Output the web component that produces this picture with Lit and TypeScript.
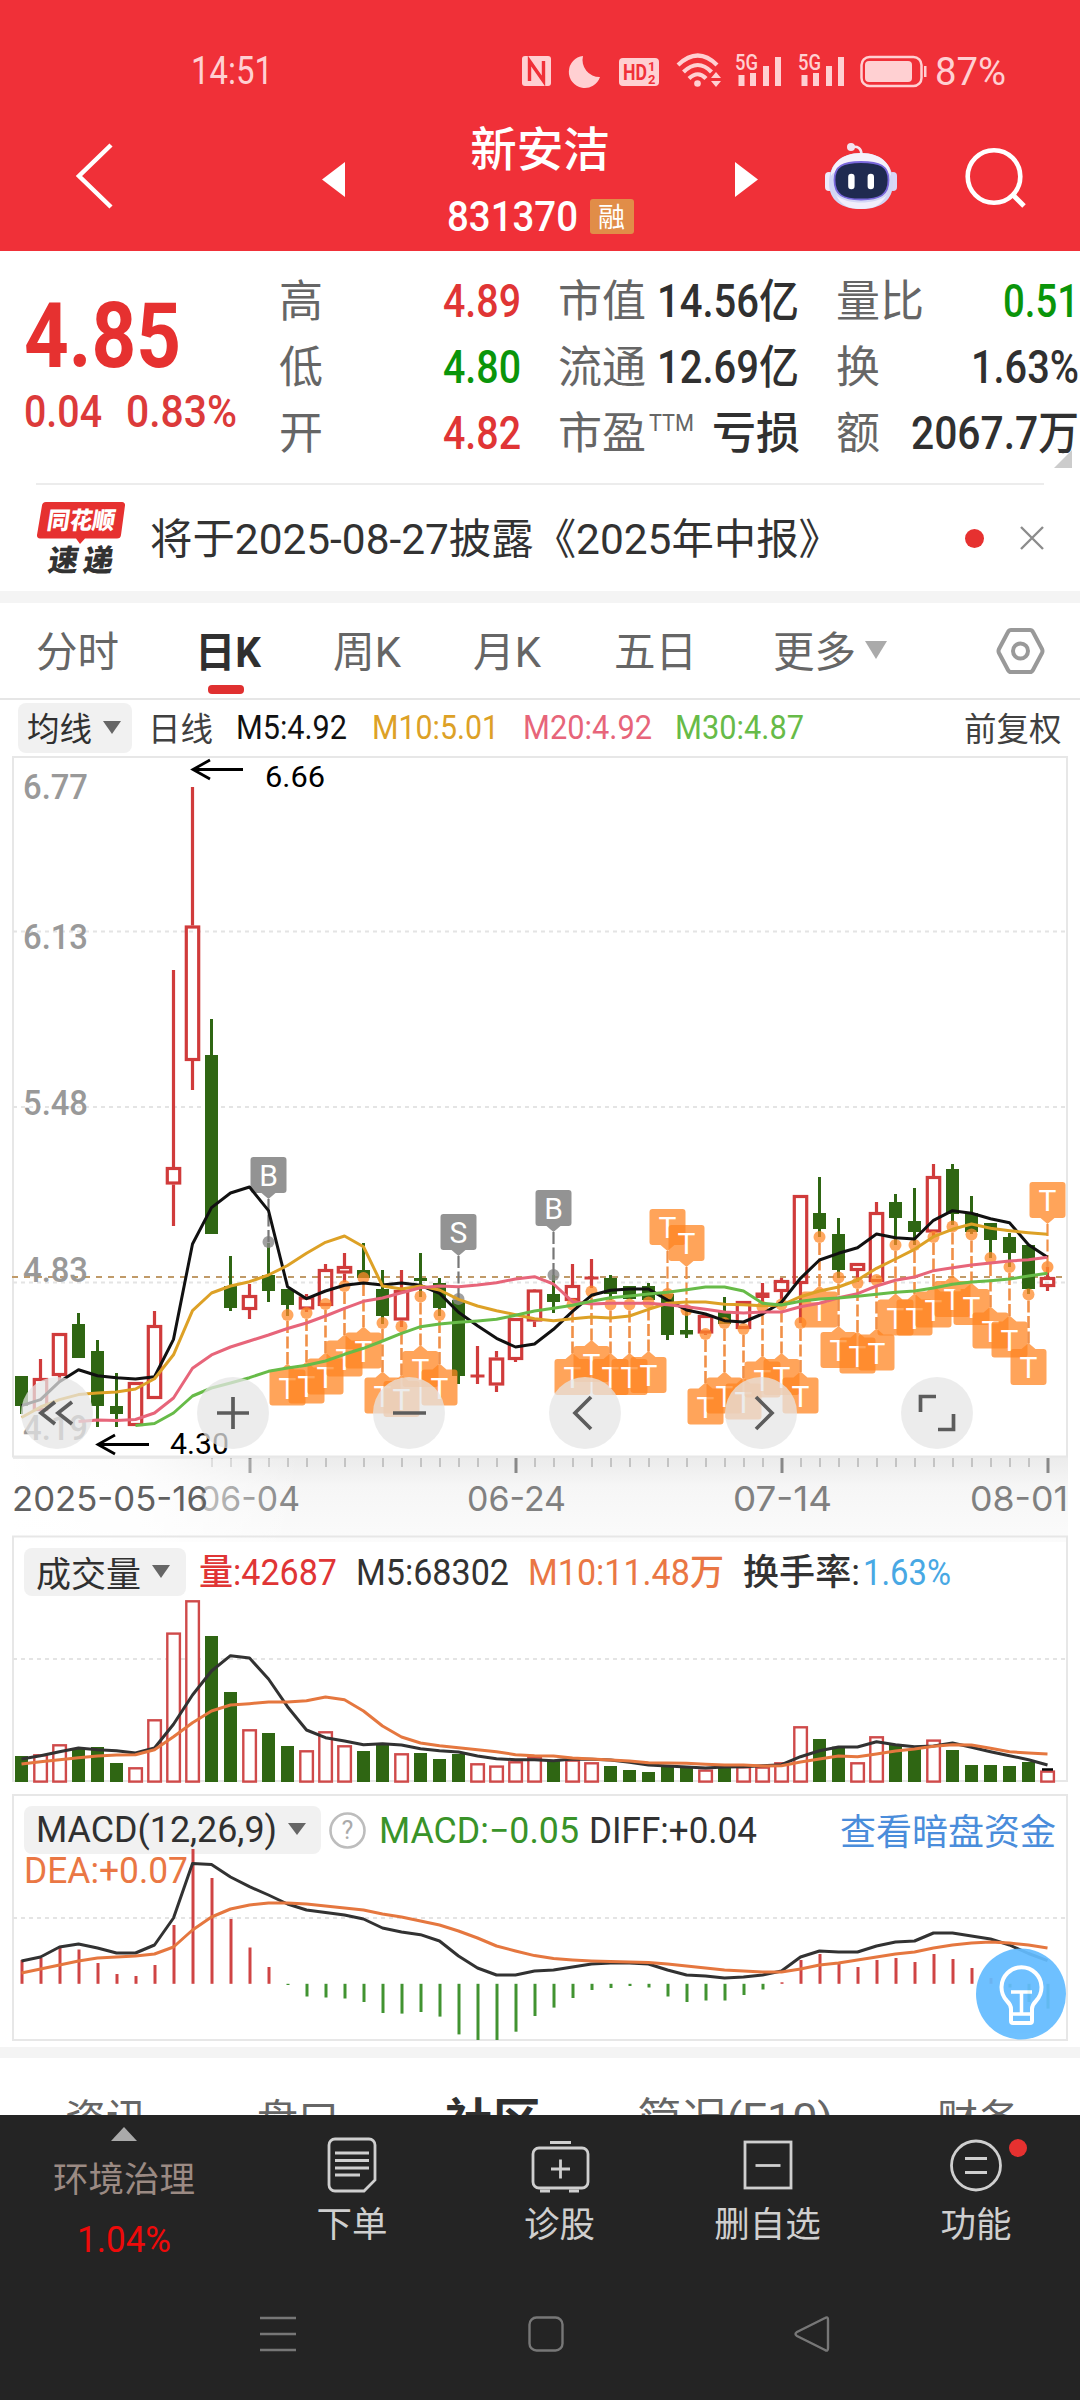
import { LitElement, html, svg, css } from "lit";
import { customElement } from "lit/decorators.js";

const STEP = 19;
const px = (i: number) => 21.5 + STEP * i;
const points = (ys: number[], start = 0) =>
  ys.map((y, k) => `${px(start + k)},${y}`).join(" ");

/** A line of text set to an exact width, vertically centred on its capitals. */
const fit = (text: string, width: number, size: number, cls = "") => html`
  <svg class="fit ${cls}" width=${width} height=${size}>
    <text x="0" y=${size * 0.86} font-size=${size} textLength=${width} lengthAdjust="spacingAndGlyphs">${text}</text>
  </svg>`;

const label = (text: string, x: number, y: number, width: number, size: number, cls: string) => svg`
  <text class=${cls} x=${x} y=${y} font-size=${size} textLength=${width} lengthAdjust="spacingAndGlyphs">${text}</text>`;

/** kind, high, body top, body bottom, low */
type Candle = ["r" | "g", number, number, number, number];
const CANDLES: Candle[] = [
  ["g", 1376, 1376, 1406, 1414], ["r", 1359, 1378, 1411, 1411], ["r", 1333, 1333, 1376, 1382],
  ["g", 1313, 1324, 1358, 1358], ["g", 1340, 1351, 1406, 1427], ["g", 1373, 1406, 1414, 1427],
  ["r", 1382, 1382, 1426, 1426], ["r", 1311, 1325, 1399, 1399], ["r", 970, 1167, 1184.5, 1226],
  ["r", 787, 925.5, 1061, 1090], ["g", 1019, 1055, 1234, 1234], ["g", 1256, 1286, 1308, 1311],
  ["r", 1284, 1295, 1310, 1319], ["g", 1243, 1275, 1291, 1302], ["g", 1289, 1289, 1305, 1316],
  ["r", 1294, 1296.5, 1309.5, 1312], ["r", 1264, 1269, 1306, 1306], ["r", 1253, 1266, 1273.5, 1282],
  ["g", 1243, 1270, 1278, 1278], ["g", 1270, 1289, 1316, 1324], ["r", 1270, 1290, 1320.5, 1327],
  ["g", 1253, 1278, 1281, 1297], ["g", 1278, 1283, 1308, 1316], ["g", 1300, 1300, 1376, 1384],
  ["r", 1346, 1375, 1377, 1384], ["r", 1351, 1357.5, 1385.5, 1392], ["r", 1318, 1318, 1360, 1362],
  ["r", 1289, 1289.5, 1321.5, 1327], ["g", 1275, 1294, 1302, 1313], ["r", 1264, 1285, 1301, 1301],
  ["r", 1259, 1277, 1279, 1288], ["g", 1275, 1278, 1294, 1300], ["g", 1286, 1286, 1299, 1299],
  ["g", 1283, 1286, 1300, 1300], ["g", 1292, 1294, 1335, 1340], ["g", 1308, 1330, 1334.5, 1338],
  ["r", 1315, 1315, 1333.5, 1335], ["g", 1297, 1312, 1324, 1324], ["r", 1301, 1301, 1329, 1329],
  ["r", 1283, 1293, 1297.5, 1303], ["r", 1278, 1280, 1292, 1302], ["r", 1195, 1195, 1284, 1323],
  ["g", 1177, 1213, 1229, 1237], ["g", 1218, 1234, 1270, 1278], ["r", 1263, 1263, 1271, 1282],
  ["r", 1202, 1212, 1282, 1282], ["g", 1194, 1202, 1218, 1245], ["g", 1188, 1221, 1232, 1245],
  ["r", 1164, 1176, 1232.5, 1237], ["g", 1164, 1169, 1214, 1225], ["g", 1196, 1213, 1232, 1234],
  ["g", 1223, 1223, 1240, 1258], ["g", 1233, 1237, 1253, 1267], ["g", 1245, 1245, 1289, 1294],
  ["r", 1267, 1277, 1287, 1291],
];

const M5 = [1405.6, 1399.6, 1381.7, 1369.8, 1375.7, 1377.7, 1379, 1376.7, 1339.4, 1244, 1207.6, 1193, 1187, 1210.6,
  1286.7, 1298.7, 1291, 1285.3, 1283, 1285, 1283, 1285.3, 1293.3, 1312.3, 1325.7, 1338.3, 1347, 1344, 1329.3, 1311.3,
  1295.3, 1290.3, 1289, 1289, 1300, 1310, 1314, 1320.7, 1322, 1314, 1302.3, 1278.3, 1260, 1253.3, 1247.7, 1234,
  1237.7, 1239, 1220.3, 1210.7, 1213.3, 1218.7, 1222.7, 1244.7, 1257.3];
const M10 = [1417.5, 1407, 1399.6, 1394.6, 1393, 1392, 1389, 1378.7, 1354.8, 1310.6, 1293, 1286, 1281.7, 1275,
  1265.5, 1253.3, 1242.3, 1236, 1246.7, 1286, 1289, 1286, 1290, 1299.3, 1306, 1310.7, 1314.7, 1318.7, 1320.7, 1318.7,
  1317, 1318, 1316, 1309.3, 1303.3, 1302, 1302, 1304.3, 1304.7, 1305.7, 1305, 1296.7, 1291, 1287, 1280, 1268.3, 1259,
  1249.3, 1236.7, 1229.3, 1224, 1228.3, 1230.7, 1232.7, 1234.3];
const M20 = [1421.5, 1420, 1420.5, 1419.5, 1413, 1398, 1368.3, 1354.9, 1347, 1341, 1335, 1328.5, 1323, 1316, 1308.3,
  1301.3, 1298, 1292.7, 1287.7, 1286, 1286.7, 1285, 1282.7, 1279, 1276.7, 1284, 1301.7, 1304, 1303.3, 1303.3, 1303.3,
  1304.7, 1306.7, 1309.3, 1312, 1313, 1312, 1312, 1306.7, 1303.3, 1297.7, 1293.7, 1286, 1280.3, 1277, 1270.7, 1267.7,
  1265, 1263, 1261, 1259.7, 1257.3];
const M30 = [1425.5, 1423.5, 1413, 1396, 1388, 1383, 1377.7, 1371.3, 1368, 1365.3, 1361, 1354.3, 1348.3, 1341, 1333.3,
  1326.7, 1324, 1322.3, 1321, 1319.3, 1315.3, 1311, 1308.3, 1305.3, 1301.3, 1297.7, 1296, 1294, 1292.3, 1289.7, 1287,
  1287, 1291, 1303.3, 1305, 1301.3, 1299, 1298, 1296.3, 1294.3, 1292.3, 1291, 1288, 1284.3, 1282, 1280.7, 1279, 1276,
  1273.3];

/** candle index, y of the marker's dot */
const T_BELOW: [number, number][] = [
  [14, 1315], [15, 1313], [16, 1304], [17, 1286], [18, 1278], [19, 1323], [20, 1326.5], [21, 1296.5], [22, 1315],
  [29, 1304.5], [30, 1291.5], [31, 1304.5], [32, 1304.5], [33, 1302.5], [36, 1334], [37, 1323], [38, 1329],
  [39, 1307], [40, 1304.5], [41, 1323], [42, 1237], [43, 1277.5], [44, 1283], [45, 1280], [46, 1245], [47, 1245],
  [48, 1237], [49, 1226.5], [50, 1234.5], [51, 1258], [52, 1267], [53, 1294.5],
];
const ABOVE: [number, number, string][] = [
  [13, 1242, "B"], [23, 1299, "S"], [28, 1275, "B"], [34, 1294, "T"], [35, 1310, "T"], [54, 1267, "T"],
];

const VOLUME = [1756, 1754.7, 1744.7, 1749, 1747, 1763, 1767.7, 1719.7, 1633, 1600.7, 1636, 1692, 1729.7, 1733, 1746,
  1750.7, 1731.7, 1745.7, 1751, 1745, 1753.7, 1753, 1759, 1754, 1763.7, 1766, 1761.7, 1757, 1761, 1760, 1762.7, 1766,
  1770, 1772, 1765, 1767, 1770, 1768, 1766.7, 1767, 1762.7, 1726.7, 1739, 1746.7, 1762.7, 1736.7, 1745, 1749, 1740,
  1750, 1765, 1765, 1766, 1762, 1771];
const VOLUME_KIND = "grrgggrrrrggrggrrrggrgggrrrrgrrgggggrgrrrrggrrggrgggggr";
const V5 = [1759, 1755.7, 1751.7, 1748, 1749.7, 1750.7, 1753, 1748, 1724.3, 1695, 1671, 1655.7, 1658, 1679, 1706.7,
  1730, 1737.7, 1741, 1744.7, 1743.7, 1745, 1748.7, 1750.7, 1752, 1756, 1758.7, 1759.7, 1759.7, 1760.7, 1759, 1759.3,
  1760, 1762.3, 1765, 1766, 1767, 1768, 1767, 1766.7, 1765.7, 1764.7, 1756.7, 1750.7, 1747, 1747, 1741.7, 1744.7,
  1746.7, 1746, 1743, 1747.3, 1751.7, 1755.7, 1759.7, 1765];
const V10 = [1764, 1761.7, 1759.7, 1757.7, 1756, 1755, 1754.7, 1749.7, 1736.7, 1722.7, 1711, 1705, 1703.7, 1702, 1702,
  1700.7, 1697, 1699.7, 1711, 1726, 1737, 1743, 1745.7, 1747.7, 1749.7, 1751.7, 1754.7, 1755.7, 1756, 1758, 1759, 1760,
  1761, 1762.7, 1763, 1763.3, 1764.3, 1765, 1765, 1766, 1765.7, 1762, 1759, 1756, 1756.7, 1754, 1751, 1749, 1746.3,
  1744.7, 1745, 1748.3, 1751.7, 1753, 1754];

const ZERO = 1983.8;
const MACD = [1960, 1958, 1947, 1949.5, 1963, 1974, 1976, 1965, 1925, 1849, 1878, 1919, 1947.5, 1967, 1985, 1996.5,
  1997.5, 1998.5, 2002, 2013, 2013.6, 2012, 2016.6, 2034.4, 2040, 2040, 2031.7, 2016, 2007.6, 1998, 1990, 1988, 1986,
  1987.5, 1996.5, 2002, 2000.5, 2000.5, 1995, 1989.5, 1982.3, 1960, 1954, 1963, 1967, 1960, 1958, 1962, 1954, 1959,
  1968, 1978, 1987.5, 2002, 2008.6];
const DIFF = [1961, 1957, 1947, 1944, 1948, 1953, 1953, 1945, 1918, 1863.6, 1864.6, 1877, 1886.7, 1895, 1904, 1910,
  1912.6, 1915, 1919, 1928, 1932, 1934.7, 1941, 1956, 1968, 1975, 1975, 1971, 1970, 1967, 1964, 1963, 1963, 1964, 1970,
  1975, 1976, 1978, 1977, 1975, 1971, 1957, 1951, 1952, 1952, 1946, 1942, 1941, 1933, 1933, 1936, 1939, 1945, 1953.5,
  1960.6];
const DEA = [1973, 1969, 1965, 1961, 1958, 1957, 1956, 1954, 1947, 1930, 1917, 1909, 1905, 1903, 1903, 1904, 1906,
  1908, 1910, 1914, 1917, 1921, 1925, 1931, 1938, 1946, 1951, 1955.6, 1958.6, 1960, 1961, 1961.6, 1962, 1962.6, 1964,
  1966, 1968, 1970, 1971, 1972, 1972, 1969, 1965, 1963, 1960, 1957, 1954, 1952, 1948, 1945, 1943, 1942, 1943, 1945,
  1948];

const candle = ([kind, high, top, bottom, low]: Candle, i: number) => {
  const x = px(i);
  if (kind === "g") {
    return svg`<g fill="#2f6613"><rect x=${x - 1.5} y=${high} width="3" height=${low - high}/>
      <rect x=${x - 6.5} y=${top} width="13" height=${bottom - top}/></g>`;
  }
  const solid = bottom - top < 5;
  return svg`<g stroke="#d03b3b" stroke-width="3.2" fill=${solid ? "#d03b3b" : "none"}>
    <path d="M${x} ${high}V${top}M${x} ${bottom}V${low}"/>
    ${solid
      ? svg`<path d="M${x - 7} ${(top + bottom) / 2}H${x + 7}" stroke-width=${bottom - top + 1}/><path d="M${x} ${top}V${bottom}"/>`
      : svg`<rect x=${x - 6.2} y=${top + 1.5} width="12.4" height=${bottom - top - 3}/>`}</g>`;
};

const below = ([i, dot]: [number, number]) => {
  const x = px(i), top = dot + 54.5;
  return svg`
    <circle cx=${x} cy=${dot} r="6" fill="#ff8a2a" opacity=".75"/>
    <path d="M${x} ${dot + 6}V${top - 5}" stroke="#f09048" stroke-width="2.6" stroke-dasharray="12 3.5"/>
    <path d="M${x - 15} ${top}H${x - 7}L${x} ${top - 6}L${x + 7} ${top}H${x + 15}a3 3 0 0 1 3 3v30a3 3 0 0 1 -3 3H${x - 15}a3 3 0 0 1 -3 -3v-30a3 3 0 0 1 3 -3z" fill="#ff8420" opacity=".74"/>
    <text class="mark" x=${x} y=${top + 29} font-size="30" text-anchor="middle">T</text>`;
};

const above = ([i, dot, letter]: [number, number, string]) => {
  const x = px(i), top = dot - 85, gray = letter !== "T";
  return svg`
    <circle cx=${x} cy=${dot} r="6" fill=${gray ? "#888" : "#ff8a2a"} opacity=".8"/>
    <path d="M${x} ${top + 42}V${dot}" stroke=${gray ? "#777" : "#f09048"} stroke-width="2.2" stroke-dasharray="12 3.5"/>
    <path d="M${x - 15} ${top}H${x + 15}a3 3 0 0 1 3 3v30a3 3 0 0 1 -3 3H${x + 7}L${x} ${top + 42}L${x - 7} ${top + 36}H${x - 15}a3 3 0 0 1 -3 -3v-30a3 3 0 0 1 3 -3z"
      fill=${gray ? "#8f8f8f" : "#ff8420"} opacity=${gray ? 0.97 : 0.74}/>
    <text class="mark" x=${x} y=${top + 28.5} font-size="30" text-anchor="middle">${letter}</text>`;
};

const volumeBar = (top: number, i: number) =>
  VOLUME_KIND[i] === "g"
    ? svg`<rect x=${px(i) - 6.5} y=${top} width="13" height=${1782 - top} fill="#2f6613"/>`
    : svg`<rect x=${px(i) - 6.2} y=${top + 0.6} width="12.6" height=${1781 - top} fill="#fff" stroke="#cf4a4a" stroke-width="2.4"/>`;

const macdBar = (y: number, i: number) => svg`
  <path d="M${px(i) + 0.5} ${ZERO}V${y}" stroke=${y < ZERO ? "#cf4444" : "#419331"} stroke-width="3"/>`;

const stat = (name: unknown, value: unknown) => html`<div class="stat"><span>${name}</span>${value}</div>`;
const caret = (size: number, h: number) => html`
  <svg class="caret" width=${size} height=${h}><path d="M0 0H${size}L${size / 2} ${h}z" fill="currentColor"/></svg>`;

@customElement("app-root")
export class AppRoot extends LitElement {
  static styles = css`
    :host { display: block; width: 1080px; height: 2400px; overflow: hidden; background: #fff; color: #323232;
      font-family: "Noto Sans CJK SC", sans-serif; line-height: 1; position: relative; }
    * { box-sizing: border-box; }
    svg { display: block; flex: none; overflow: visible; }
    text { fill: currentColor; font-family: Roboto, "Noto Sans CJK SC", sans-serif; }
    .b text { font-weight: 700; }
    .m text { font-weight: 500; }
    .n text { font-weight: 450; }
    .red { color: #e03535; } .green { color: #0a950a; } .dark { color: #303030; }
    .top { height: 251px; background: #f03038; color: #fff; }
    .status { height: 90px; padding: 46px 75px 0 191px; display: flex; justify-content: space-between; color: #ffd0d2; }
    .status .fit { margin-top: 5px; }
    .title { height: 161px; display: grid; grid-template-columns: 322px 116px 204px 93px 90px 103px 1fr; align-items: start; }
    .back { margin: 52px 0 0 73px; } .tri { margin-top: 72px; } .bot { margin: 53px 0 0 -1px; } .search { margin: 56px 0 0 36px; }
    .name { display: flex; flex-direction: column; align-items: center; padding-top: 33px; }
    .name b { font-weight: 500; font-size: 46.5px; line-height: 46px; }
    .code { display: flex; align-items: center; gap: 12px; margin-top: 25px; }
    .badge { width: 44px; height: 35px; border-radius: 3px; background: #e18d48; font-size: 27px; line-height: 33px; text-align: center; margin-top: 1px; }
    .quote { height: 232px; display: grid; grid-template-columns: 281px 799px; position: relative; }
    .price { padding: 39px 0 0 24px; color: #e63130; }
    .change { display: flex; gap: 24px; margin-top: 8px; color: #dc3a3a; }
    .stats { display: grid; grid-template-columns: 240px 239px 241px; column-gap: 39px; grid-auto-rows: 66px; padding-top: 16px; }
    .stat { display: flex; justify-content: space-between; align-items: center; font-size: 44px; color: #666; }
    .stat > span { display: flex; align-items: center; margin: 0 0 5px -2px; }
    .stat .ttm { margin: -16px 0 0 3px; }
    .stat > .strong { color: #303030; font-weight: 500; margin-right: -1px; }
    .corner { position: absolute; right: 8px; bottom: 15px; }
    .news { height: 108px; margin: 0 36px; border-top: 2px solid #ececec; display: grid; grid-template-columns: 114px 1fr 20px 35px 24px; align-items: center; }
    .news .dot { width: 19px; height: 19px; border-radius: 50%; background: #e63130; }
    .news .close { grid-column: 5; }
    .band { height: 12px; background: #f4f4f4; }
    .band.low { height: 11px; }
    .tabs { height: 97px; border-bottom: 2px solid #e6e6e6; padding: 0 0 0 36px; display: grid; color: #666; font-size: 41.5px;
      grid-template-columns: 159px 138px 140px 141px 159px 223px 1fr; align-items: center; position: relative; }
    .tabs > span { display: flex; align-items: center; padding-bottom: 1px; }
    .tabs .fit { margin-top: 3px; }
    .tabs .on { color: #303030; font-weight: 700; position: relative; }
    .tabs .on::after { content: ""; position: absolute; left: 13px; top: 57px; width: 36px; height: 9px; border-radius: 4px; background: #e03030; }
    .caret { color: #666; margin-left: 11px; }
    .tabs .caret { color: #aaa; margin-left: 9px; }
    .mas { height: 55px; display: grid; grid-template-columns: 130px 88px 136px 151px 152px 289px 1fr; align-items: center; padding-left: 18px; font-size: 32.5px; color: #404040; }
    .chip { background: #f1f1f1; border-radius: 8px; display: flex; align-items: center; height: 50px; color: #303030; }
    .mas .chip { width: 114px; padding-left: 9px; }
    .c5 { color: #111; } .c10 { color: #dda126; } .c20 { color: #e7657a; } .c30 { color: #67bb48; }
    .grid { stroke: #e7e7e7; stroke-width: 2; fill: none; }
    .dash { stroke: #e4e4e4; stroke-width: 2; stroke-dasharray: 4 4; }
    .line { fill: none; stroke-width: 3; stroke-linejoin: round; }
    .scale { fill: #999; font-weight: 500; } .note { fill: #000; }
    .day, .day0 { fill: #808080; font-family: Inter, sans-serif; } .day0 { fill: #606060; } .mark { fill: #fff; }
    .panel { position: relative; }
    .tools { position: absolute; left: 21px; top: 622px; display: flex; gap: 104px; }
    .legend { position: absolute; left: 24px; display: flex; align-items: center; height: 48px; font-size: 35px; color: #323232; }
    .volume .legend { top: 7px; } .macd .legend { top: 14px; }
    .legend .chip { height: 48px; padding: 0 0 2px 12px; }
    .volume .chip { width: 162px; margin-right: 13px; }
    .macd .chip { width: 297px; margin-right: 8px; }
    .or { color: #ea7744; } .blue { color: #48a8e4; } .g2 { color: #399329; }
    .s19 { margin-left: 19px; } .s3 { margin-left: 3px; } .s10 { margin-left: 10px; }
    .link { position: absolute; right: 24px; top: 17px; font-size: 36px; line-height: 40px; color: #4a8ddb; }
    .dea { position: absolute; left: 24px; top: 60px; }
    .bars { position: absolute; left: 0; top: 0; }
    .tip { position: absolute; left: 976px; top: 156px; opacity: .93; }
    .sections { height: 57px; overflow: hidden; padding: 36px 0 0 65px; display: grid; font-size: 41px; line-height: 45px; color: #666;
      grid-template-columns: 192px 188px 192px 300px 1fr; }
    .sections b { font-size: 48px; color: #303030; line-height: 48px; margin-top: -1px; font-weight: 700; }
    .sections .fit { margin-top: 3px; }
    .dock { height: 285px; background: #242424; color: #cfcfcf; position: relative; }
    .actions { height: 175px; display: grid; grid-template-columns: 248px 208px 207px 209px 208px; font-size: 35.5px; line-height: 40px; }
    .act { display: flex; flex-direction: column; align-items: center; }
    .act .ico { margin-top: 21px; height: 58px; } .act span { margin-top: 8px; }
    .sector { display: flex; flex-direction: column; align-items: center; color: #9b8a83; width: 248px; }
    .sector .up { margin-top: 12px; } .sector span { margin-top: 16px; } .sector .fit { margin-top: 24px; color: #ee0a0a; }
    .nav { display: grid; grid-template-columns: 260px 268px 267px 1fr; padding-top: 26px; }
    .nav svg:first-child { grid-column: 2; }
  `;

  private header() {
    const signal = svg`<text x="0" y="16" font-size="22" font-weight="500" textLength="23" lengthAdjust="spacingAndGlyphs">5G</text>
      <path d="M6.500 32V21M18 32V19M31 32V12M43 32V3" stroke="currentColor" stroke-width="6"/>`;
    return html`<div class="top">
      <div class="status">
        ${fit("14:51", 82, 38)}
        <svg width="484" height="50" viewBox="521 46 484 50">
          <path fill="currentColor" fill-rule="evenodd" d="M525 56H548a3 3 0 0 1 3 3V83a3 3 0 0 1 -3 3H525a3 3 0 0 1 -3 -3V59a3 3 0 0 1 3 -3z"/>
          <path d="M529.500 81V61L543.500 81V61" fill="none" stroke="#f03038" stroke-width="3.400"/>
          <path d="M583 56A16 16 0 1 0 600 77A17 17 0 0 1 583 56z" fill="currentColor"/>
          <rect x="619" y="58" width="40" height="28" rx="4" fill="currentColor"/>
          <g color="#f03038"><text x="623" y="80" font-size="22" font-weight="700" textLength="24" lengthAdjust="spacingAndGlyphs">HD</text>
          <text x="648" y="71" font-size="13" font-weight="700">1</text><text x="648" y="83.500" font-size="13" font-weight="700">2</text></g>
          <g fill="none" stroke="currentColor" stroke-width="4.200"><path d="M678 65Q698 46 717 65M683.500 72Q698 58 711.500 72M689 78.500Q698 70 706 78.500"/></g>
          <circle cx="697.500" cy="83.500" r="3.300" fill="currentColor"/>
          <path d="M711 78l5 -6l5 6zM711 81l5 6l5 -6z" fill="currentColor"/>
          <g transform="translate(735 54)">${signal}</g><g transform="translate(798 54)">${signal}</g>
          <rect x="861.500" y="57" width="60" height="29" rx="8" fill="none" stroke="currentColor" stroke-width="2.500"/>
          <rect x="865" y="61" width="47" height="21" rx="4" fill="currentColor"/><rect x="924" y="66" width="2.500" height="11" fill="currentColor"/>
          <text x="935" y="84.500" font-size="38" textLength="71" lengthAdjust="spacingAndGlyphs">87%</text>
        </svg>
      </div>
      <div class="title">
        <svg class="back" width="44" height="68"><path d="M38 3L6 34L38 65" fill="none" stroke="#fff" stroke-width="4.500"/></svg>
        <svg class="tri" width="24" height="35"><path d="M23 0V35L0 17.500z" fill="#fff"/></svg>
        <div class="name"><b>新安洁</b>
          <div class="code">${fit("831370", 131, 43, "m")}<span class="badge">融</span></div></div>
        <span></span>
        <svg class="tri" width="24" height="35"><path d="M0 0V35L23 17.500z" fill="#fff"/></svg>
        <svg class="bot" width="74" height="68" viewBox="824 143 74 68">
          <path d="M861.500 154Q861 145.500 852 147" stroke="#f4e6f2" stroke-width="2.600" fill="none"/><circle cx="851" cy="147" r="4" fill="#f3e3ef"/>
          <rect x="825" y="172" width="8" height="19" rx="4" fill="#eeeafb"/><rect x="889" y="172" width="8" height="19" rx="4" fill="#d9d6f6"/>
          <path d="M861 153C881 153 893 164 893 183C893 201 880 209 861 209C842 209 829 201 829 183C829 164 841 153 861 153z" fill="#d3d6f5"/>
          <path d="M861 153C881 153 891 164 891 176C885 162 838 162 831 176C831 164 842 153 861 153z" fill="#f5f1fb"/>
          <path d="M836 195C846 205 876 205 887 195C880 206 873 209 861 209C848 209 841 205 836 195z" fill="#f0eefc"/>
          <path d="M861 162C880 162 888.500 166 888.500 180C888.500 195 880 199.500 861 199.500C843 199.500 834.500 195 834.500 180C834.500 166 843 162 861 162z" fill="#1f2a50" stroke="#7a68dc" stroke-width="1.800"/>
          <path d="M851.400 177V186M870.800 177V186" stroke="#fff" stroke-width="6.400" stroke-linecap="round"/>
        </svg>
        <svg class="search" width="66" height="66"><circle cx="30" cy="30.500" r="26.300" fill="none" stroke="#fff" stroke-width="4.600"/><path d="M49 49L60 60" stroke="#fff" stroke-width="5"/></svg>
      </div>
    </div>`;
  }

  private quote() {
    return html`<div class="quote">
      <div class="price">${fit("4.85", 157, 90, "b")}
        <div class="change">${fit("0.04", 78, 45, "m")}${fit("0.83%", 111, 45, "m")}</div></div>
      <div class="stats">
        ${stat("高", fit("4.89", 78, 46, "m red"))}
        ${stat("市值", fit("14.56亿", 142, 46, "m dark"))}
        ${stat("量比", fit("0.51", 76, 46, "m green"))}
        ${stat("低", fit("4.80", 78, 46, "m green"))}
        ${stat("流通", fit("12.69亿", 142, 46, "m dark"))}
        ${stat("换", fit("1.63%", 108, 46, "m dark"))}
        ${stat("开", fit("4.82", 78, 46, "m red"))}
        ${stat(html`市盈<span class="ttm">${fit("TTM", 45, 24)}</span>`, html`<span class="strong">亏损</span>`)}
        ${stat("额", fit("2067.7万", 168, 46, "m dark"))}
      </div>
      <svg class="corner" width="18" height="18"><path d="M18 0V18H0z" fill="#ccc"/></svg>
    </div>
    <div class="news">
      <svg width="90" height="74" viewBox="36 500 90 74">
        <path d="M46 501H122a3 3 0 0 1 3 3.500L121 534a4 4 0 0 1 -4 3.500H85L80 543L76 537.500H40a3 3 0 0 1 -3 -3.500L42 504.500a4 4 0 0 1 4 -3.500z" fill="#e63130"/>
        <g font-weight="900"><text transform="translate(46 528) skewX(-9)" font-size="24" textLength="68" lengthAdjust="spacingAndGlyphs" color="#fff">同花顺</text>
        <text transform="translate(47 570) skewX(-9)" font-size="30" textLength="65">速递</text></g>
      </svg>
      ${fit("将于2025-08-27披露《2025年中报》", 691, 42.5)}
      <span class="dot"></span>
      <svg class="close" width="24" height="24"><path d="M1 1L23 23M23 1L1 23" stroke="#8c8c8c" stroke-width="2.400"/></svg>
    </div>`;
  }

  private mainChart() {
    const ticks = Array.from({ length: 45 }, (_, k) => k + 10);
    return html`<div class="panel">
      <svg width="1080" height="786" viewBox="0 755 1080 786">
        <defs>
          <linearGradient id="fall" x1="0" y1="0" x2="0" y2="1"><stop offset="0" stop-color="#ebebeb"/><stop offset=".35" stop-color="#f6f6f6"/><stop offset="1" stop-color="#fbfbfb"/></linearGradient>
          <linearGradient id="veil"><stop offset="0" stop-color="#fff"/><stop offset=".45" stop-color="#fff" stop-opacity=".85"/><stop offset="1" stop-color="#fff" stop-opacity="0"/></linearGradient>
        </defs>
        <rect x="13" y="1457" width="1055" height="85" fill="url(#fall)"/>
        <path class="grid" d="M13 757H1067V1456.500H13z"/>
        <path class="dash" d="M13 931.500H1067M13 1107H1067M13 1282.500H1067"/>
        <path d="M12 1277H1067" stroke="#c09a68" stroke-width="2" stroke-dasharray="6 6"/>
        ${label("6.77", 23, 799, 65, 35, "scale")}${label("6.13", 23, 949, 65, 35, "scale")}
        ${label("5.48", 23, 1115, 65, 35, "scale")}${label("4.83", 23, 1282, 65, 35, "scale")}${label("4.19", 23, 1440, 65, 35, "scale")}
        ${CANDLES.map(candle)}
        ${T_BELOW.map(below)}${ABOVE.map(above)}
        <polyline class="line" stroke="#111" points=${points(M5)}/>
        <polyline class="line" stroke="#dda126" points=${points(M10)}/>
        <polyline class="line" stroke="#e7657a" points=${points(M20, 3)}/>
        <polyline class="line" stroke="#67bb48" points=${points(M30, 6)}/>
        <g fill="none" stroke="#000" stroke-width="2.800"><path d="M243 769.500H193M210 760L193 769.500L210 779"/><path d="M149 1444.500H98M115 1435L98 1444.500L115 1454"/></g>
        ${label("6.66", 265, 787, 60, 29, "note")}${label("4.30", 170, 1453.5, 59, 29, "note")}
        ${ticks.map((i) => (i - 12) % 14 === 0
          ? svg`<path d="M${px(i) + 0.500} 1458V1473" stroke="#888" stroke-width="3"/>`
          : svg`<path d="M${px(i) + 0.500} 1458V1467" stroke="#c4c4c4" stroke-width="2"/>`)}
        ${label("06-04", 199, 1511, 101, 34.5, "day")}
        <rect x="0" y="1459" width="300" height="83" fill="url(#veil)"/>
        ${label("2025-05-16", 12, 1511, 196, 34.5, "day0")}
        ${label("06-24", 467, 1511, 99, 34.5, "day")}${label("07-14", 733, 1511, 99, 34.5, "day")}${label("08-01", 970, 1511, 98, 34.5, "day")}
        <path class="grid" d="M13 1542V1536.500H1067V1542"/>
      </svg>
      <div class="tools">${[
        "M34 25L20 36L34 47M51 25L37 36L51 47",
        "M20 36H52M36 20V52",
        "M20 36H53",
        "M42 20L26 36L42 52",
        "M31 20L47 36L31 52",
        "M19.500 35V19.500H35M37 52.500H52.500V37",
      ].map((d) => html`<svg width="72" height="72"><circle cx="36" cy="36" r="36" fill="#e6e6e6" opacity=".74"/>
        <path d=${d} fill="none" stroke="#5c5c5c" stroke-width="3.700"/></svg>`)}</div>
    </div>`;
  }

  private volume() {
    return html`<div class="panel volume">
      <svg width="1080" height="251" viewBox="0 1541 1080 251">
        <path class="grid" d="M13 1541V1781H1067V1541"/><path class="dash" d="M13 1659H1067"/>
        ${VOLUME.map(volumeBar)}
        <polyline class="line" stroke="#323232" points=${points(V5)}/>
        <polyline class="line" stroke="#e5773f" points=${points(V10)}/>
        <path d="M1042 1769.500H1053" stroke="#000" stroke-width="2.500"/>
      </svg>
      <div class="legend"><span class="chip">成交量${caret(18, 13)}</span>
        ${fit("量:42687", 138, 36, "n red")}<i class="s19"></i>${fit("M5:68302", 153, 36, "n")}<i class="s19"></i>
        ${fit("M10:11.48万", 196, 36, "n or")}<i class="s19"></i>${fit("换手率:", 117, 36, "n")}<i class="s3"></i>${fit("1.63%", 88, 36, "n blue")}</div>
    </div>`;
  }

  private macd() {
    return html`<div class="panel macd">
      <svg width="1080" height="255" viewBox="0 1792 1080 255">
        <path class="grid" d="M13 1795H1067V2040H13z"/><path class="dash" d="M13 1918H1067"/>
      </svg>
      <div class="legend"><span class="chip">${fit("MACD(12,26,9)", 241, 36, "n")}${caret(18, 12)}</span>
        <svg width="37" height="37"><circle cx="18.500" cy="18.500" r="17" fill="none" stroke="#bdbdbd" stroke-width="2.600"/><text x="18.500" y="27" font-size="25" text-anchor="middle" color="#aaa">?</text></svg>
        <i class="s10"></i><i class="s3"></i>${fit("MACD:−0.05", 200, 36, "n g2")}<i class="s10"></i>${fit("DIFF:+0.04", 168, 36)}</div>
      <div class="dea">${fit("DEA:+0.07", 164, 36, "n or")}</div>
      <svg class="bars" width="1080" height="255" viewBox="0 1792 1080 255">
        ${MACD.map(macdBar)}
        <polyline class="line" stroke="#323232" points=${points(DIFF)}/>
        <polyline class="line" stroke="#e5773f" points=${points(DEA)}/>
      </svg>
      <div class="link">查看暗盘资金</div>
      <svg class="tip" width="90" height="92" viewBox="0 0 90 92"><ellipse cx="45" cy="46" rx="45" ry="45.500" fill="#64bcff"/>
        <g fill="none" stroke="#fff" stroke-width="4" stroke-linejoin="round"><path d="M35 73V61Q35 57 31 53A20 20 0 1 1 60 53Q56 57 56 61V73Q56 75 54 75H37Q35 75 35 73z"/>
        <path d="M35 44H56M45.500 44V66M36 66H55" stroke-width="3.500"/></g></svg>
    </div>`;
  }

  private dock() {
    return html`<div class="dock">
      <div class="actions">
        <div class="sector"><svg class="up" width="26" height="14"><path d="M13 0L26 14H0z" fill="#aaa"/></svg><span>环境治理</span>${fit("1.04%", 94, 36)}</div>
        <div class="act"><svg class="ico" width="70" height="58" viewBox="-35 -29 70 58"><g fill="none" stroke="#cfcfcf" stroke-width="2.800">
          <path d="M-17 -26H17a6 6 0 0 1 6 6V15L12 26H-17a6 6 0 0 1 -6 -6V-20a6 6 0 0 1 6 -6z"/><path d="M-17 -12H17M-17 -4.500H17M-17 3H17M-17 10H8"/></g></svg><span>下单</span></div>
        <div class="act"><svg class="ico" width="70" height="58" viewBox="-35 -29 70 58"><g fill="none" stroke="#cfcfcf" stroke-width="2.800">
          <rect x="-27" y="-17" width="55" height="40" rx="6"/><path d="M-10 -22.500H11M-9 4H10M0.500 -5.500V13.500M-20 26H-10M9 26H19"/></g></svg><span>诊股</span></div>
        <div class="act"><svg class="ico" width="70" height="58" viewBox="-35 -29 70 58"><g fill="none" stroke="#cfcfcf" stroke-width="2.800">
          <rect x="-23" y="-23" width="46" height="46"/><path d="M-12.500 0.500H12.500"/></g></svg><span>删自选</span></div>
        <div class="act"><svg class="ico" width="110" height="58" viewBox="-55 -29 110 58"><g fill="none" stroke="#cfcfcf" stroke-width="2.800">
          <circle cx="0" cy="0.500" r="24.500"/><path d="M-11 -6.500H11M-11 7.500H11"/></g><circle cx="42" cy="-17" r="9" fill="#e63130"/></svg><span>功能</span></div>
      </div>
      <div class="nav">
        <svg width="36" height="36"><path d="M0 2H36M0 18H36M0 34H36" stroke="#777" stroke-width="2.600"/></svg>
        <svg width="36" height="36"><rect x="1.500" y="1.500" width="33" height="33" rx="7" fill="none" stroke="#777" stroke-width="2.400"/></svg>
        <svg width="36" height="36"><path d="M30 2Q33 0 33 4V32Q33 36 30 34L2 20Q-1 18 2 16z" fill="none" stroke="#777" stroke-width="2.400"/></svg>
      </div>
    </div>`;
  }

  render() {
    return html`
      ${this.header()}
      ${this.quote()}
      <div class="band"></div>
      <div class="tabs">
        <span>分时</span><span class="on">${fit("日K", 66, 42, "b")}</span><span>${fit("周K", 68, 42)}</span><span>${fit("月K", 68, 42)}</span>
        <span>五日</span><span>更多${caret(22, 18)}</span>
        <svg width="50" height="48"><g fill="none" stroke="#999" stroke-width="4"><path d="M15 3H34Q36 3 37 5L46 22Q47 24 46 26L37 43Q36 45 34 45H15Q13 45 12 43L3 26Q2 24 3 22L12 5Q13 3 15 3z"/><circle cx="24.500" cy="24" r="7.500"/></g></svg>
      </div>
      <div class="mas">
        <span class="chip">均线${caret(18, 13)}</span><span>日线</span>
        ${fit("M5:4.92", 111, 33, "n c5")}${fit("M10:5.01", 127, 33, "n c10")}${fit("M20:4.92", 129, 33, "n c20")}${fit("M30:4.87", 129, 33, "n c30")}
        <span>前复权</span>
      </div>
      ${this.mainChart()}
      ${this.volume()}
      ${this.macd()}
      <div class="band low"></div>
      <div class="sections"><span>资讯</span><span>盘口</span><b>社区</b>${fit("简况(F10)", 196, 41)}<span>财务</span></div>
      ${this.dock()}
    `;
  }
}
